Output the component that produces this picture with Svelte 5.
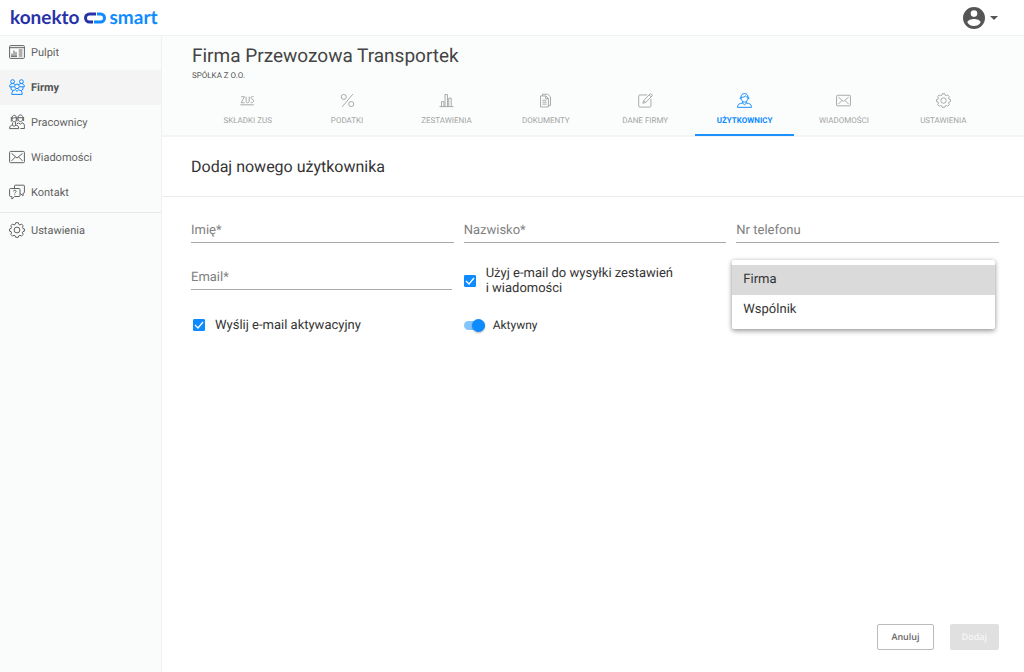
<script>
  const nav = [
    { id: 'board', label: 'Pulpit' },
    { id: 'companies', label: 'Firmy', active: true },
    { id: 'staff', label: 'Pracownicy' },
    { id: 'mail', label: 'Wiadomości' },
    { id: 'chat', label: 'Kontakt' },
    { id: 'gear', label: 'Ustawienia', separated: true }
  ];

  const tabs = [
    { id: 'zus', label: 'Składki ZUS' },
    { id: 'percent', label: 'Podatki' },
    { id: 'chart', label: 'Zestawienia' },
    { id: 'docs', label: 'Dokumenty' },
    { id: 'edit', label: 'Dane firmy' },
    { id: 'user', label: 'Użytkownicy', active: true },
    { id: 'mail', label: 'Wiadomości' },
    { id: 'gear', label: 'Ustawienia' }
  ];

  let firstName = $state('');
  let lastName = $state('');
  let phone = $state('');
  let email = $state('');
  let useEmail = $state(true);
  let sendActivation = $state(true);
  let enabled = $state(true);
  let role = $state('Firma');
</script>

{#snippet icon(id)}
  <svg class="icon" viewBox="0 0 16 16" aria-hidden="true">
    {#if id === 'board'}
      <rect x=".6" y="1.6" width="14.8" height="12.8" rx="1" />
      <path d="M.6 3.7h14.8M3 12.3V9.5M5 12.3V6.5M7 12.3V8M2 12.3h6M9.8 6h3.6M9.8 8h3.6M9.8 10h3.6M9.8 12h3.6" />
    {:else if id === 'companies'}
      <circle cx="3.600" cy="2.600" r="1.900" />
      <circle cx="12.400" cy="2.600" r="1.900" />
      <circle cx="8" cy="7.400" r="2.300" />
      <path d="M.6 7.800c0-2.200 1-3.200 3-3.200 1.400 0 2.100.4 2.600 1.200M.6 7.800h4.600M15.400 7.800c0-2.200-1-3.200-3-3.200-1.400 0-2.100.4-2.600 1.200M15.400 7.800h-4.600M2.800 15.400c0-3.200 1.200-4.200 3.600-4.600L8 12.300l1.600-1.500c2.400.4 3.600 1.400 3.600 4.600zM2 8v2.300l1.900 1.300M14 8v2.300l-1.900 1.300" />
    {:else if id === 'staff'}
      <path d="M3 5.500V4c0-1.700.9-2.700 2.200-2.700S7.300 2.300 7.300 4v1.500c0 1.300-1 2.300-2.100 2.300S3 6.800 3 5.500zM3 4.200c1.600 0 2.500-.4 3-1 .3.600.7.900 1.300 1" />
      <path d="M9 5V3.500C9 1.900 10 1 11.400 1s2.400.9 2.400 2.500V5c0 1.400-1.100 2.500-2.400 2.500S9 6.400 9 5zM9 3.700h4.800M2.300 3v4.600M8 3v4.500M14.600 3v4" />
      <path d="M.6 14.600c0-2.400 1-3.200 2.600-3.500l1.900 1.300L7 11.100c1.800.3 2.700 1.100 2.700 3.500zM3.600 10.900V8.500M6.600 10.900V7.800M9.800 9l1.600 1.200L13 8.800c1.600.3 2.400 1.200 2.400 3.400v2.300h-4M8 9.700l1.600-.7" />
    {:else if id === 'mail'}
      <rect x=".6" y="2.400" width="14.800" height="11.300" rx="1" />
      <path d="M2.500 4.400 8 9l5.500-4.600M2.500 11.900l3.800-3.900M13.500 11.900 9.700 8" />
    {:else if id === 'chat'}
      <path d="M5.500 4.300V2c0-.5.300-.8.800-.8h8.300c.5 0 .8.300.8.800v6.300c0 .5-.3.800-.8.800h-.5v2.700l-2.700-2.300" />
      <path d="M1.400 4.500h8.800c.5 0 .8.300.8.800v6.400c0 .5-.3.800-.8.800H5.700l-2.800 2.600v-2.600H1.400c-.5 0-.8-.3-.8-.8V5.300c0-.5.300-.8.800-.8z" />
      <path d="M4.400 7.400c0-.7.500-1.200 1.300-1.200s1.400.5 1.400 1.200c0 .9-1.300 1-1.300 2M5.800 10.400v.8" />
    {:else if id === 'gear'}
      <circle cx="8" cy="8" r="2.900" />
      <path d="M6.700.7h2.600l.5 1.700 1.100.5 1.600-.9 1.700 1.800-.8 1.500.5 1.200 1.500.4v2.300l-1.600.5-.4 1.100.8 1.600-1.700 1.700-1.600-.8-1.100.5-.5 1.500H6.700l-.5-1.500-1.100-.5-1.600.8-1.700-1.700.8-1.600-.4-1.100-1.600-.5V6.900l1.500-.4.5-1.200-.8-1.500L3.500 2l1.600.9 1.100-.5z" />
    {:else if id === 'zus'}
      <path d="M1.200 4h3.600L1.200 10.400h3.700M6.500 3.900v4.700c0 1.200.7 1.800 1.600 1.800s1.700-.6 1.700-1.800V3.900M14.500 3.900c-2-.3-3 .4-2.900 1.300.1 1.500 2.900 1.200 2.900 3.200 0 1.300-1.200 2.200-3 2M.4 12.600h14.300" />
    {:else if id === 'percent'}
      <circle cx="4" cy="4.200" r="2.700" />
      <circle cx="12" cy="11.800" r="2.700" />
      <path d="M13.700 1.200 2.300 14.800" />
    {:else if id === 'chart'}
      <path d="M.6 14.500h14.800M2.600 14.500V9.200h2.600v5.300M6.400 14.500V1.600H9v12.900M10.400 14.500v-9H13v9" />
    {:else if id === 'docs'}
      <path d="M4.800 3V1.300h5.600l2.900 2.800v9.100h-2" />
      <path d="M2.700 3.100h5.600l2.800 2.800v9H2.700zM8.200 3.200V6H11M4.700 7.700h4.400M4.700 9.800h4.400M4.700 11.900h4.400" />
    {:else if id === 'edit'}
      <path d="M9.800 2.100H2c-.8 0-1.300.5-1.300 1.300v10.300c0 .8.500 1.300 1.300 1.300h10.500c.8 0 1.300-.5 1.300-1.300V6.500" />
      <path d="M5.200 11l.8-3L13 .9c.8-.6 2.700 1.100 2.100 2.100L8.200 10.100zM11.900 2l2.200 2.200M6 8l2.200 2.100" />
    {:else if id === 'user'}
      <path d="M4.200 4.800C4.200 2 5.700.6 8 .6s3.800 1.400 3.800 4.200c0 2.900-1.600 4.900-3.800 4.900S4.200 7.700 4.200 4.800z" />
      <path d="M4.200 4.600c2.700 0 4.300-.6 5-1.400.6.800 1.400 1.200 2.600 1.400M3.500 4.500v2M12.500 4.500v2M6 9.200v1.600l2 1.700 2-1.700V9.200M6 10.800c-3.800.3-5.400 1.200-5.400 4.500h14.800c0-3.300-1.600-4.200-5.400-4.500" />
    {/if}
  </svg>
{/snippet}

<div class="app">
  <header class="topbar">
    <a class="logo" href="#home">
      <span>konekto</span>
      <svg viewBox="0 0 22 12" aria-hidden="true">
        <path class="link-left" d="M12 2H5.500a4 4 0 0 0 0 8h3.500" />
        <path class="link-right" d="M13 2h3.500a4 4 0 0 1 0 8H10" />
      </svg>
      <span class="bright">smart</span>
    </a>
    <button class="account" aria-label="Konto">
      <svg class="avatar" viewBox="2 2 20 20" aria-hidden="true">
        <path d="M12 2a10 10 0 1 0 0 20 10 10 0 0 0 0-20zm0 3a3 3 0 1 1 0 6 3 3 0 0 1 0-6zm0 14.200a7.200 7.200 0 0 1-6-3.220c.03-1.990 4-3.080 6-3.080s5.970 1.090 6 3.080a7.200 7.200 0 0 1-6 3.220z" />
      </svg>
      <svg class="caret" viewBox="0 0 8 4" aria-hidden="true"><path d="M0 0h8L4 4z" /></svg>
    </button>
  </header>

  <div class="body">
    <nav class="sidebar" aria-label="Menu">
      {#each nav as item}
        <a href="#{item.id}" class:active={item.active} class:separated={item.separated}>
          {@render icon(item.id)}
          <span>{item.label}</span>
        </a>
      {/each}
    </nav>

    <main>
      <section class="company">
        <h1>Firma Przewozowa Transportek</h1>
        <p>SPÓŁKA Z O.O.</p>
        <nav class="tabs" aria-label="Firma">
          {#each tabs as tab}
            <a href="#{tab.id}" class:active={tab.active}>
              {@render icon(tab.id)}
              <span>{tab.label}</span>
            </a>
          {/each}
        </nav>
      </section>

      <h2>Dodaj nowego użytkownika</h2>

      <form onsubmit={(e) => e.preventDefault()}>
        <div class="fields">
          <input class="text" aria-label="Imię" placeholder="Imię*" bind:value={firstName} />
          <input class="text" aria-label="Nazwisko" placeholder="Nazwisko*" bind:value={lastName} />
          <input class="text" aria-label="Nr telefonu" placeholder="Nr telefonu" bind:value={phone} />

          <input class="text email" type="email" aria-label="Email" placeholder="Email*" bind:value={email} />
          <label class="check reports">
            <input type="checkbox" bind:checked={useEmail} />
            <span>Użyj e-mail do wysyłki zestawień<br />i wiadomości</span>
          </label>
          <div class="role">
            <select class="panel" size="2" aria-label="Rola" bind:value={role}>
              <option>Firma</option>
              <option>Wspólnik</option>
            </select>
          </div>

          <label class="check activation">
            <input type="checkbox" bind:checked={sendActivation} />
            <span>Wyślij e-mail aktywacyjny</span>
          </label>
          <label class="switch">
            <input type="checkbox" role="switch" bind:checked={enabled} />
            <span>Aktywny</span>
          </label>
        </div>

        <div class="actions">
          <button type="button" class="cancel">Anuluj</button>
          <button type="submit" class="submit" disabled>Dodaj</button>
        </div>
      </form>
    </main>
  </div>
</div>

<style>
  :global(body) {
    margin: 0;
    background: #fff;
  }

  .app,
  .app * {
    box-sizing: border-box;
  }

  .app {
    display: flex;
    flex-direction: column;
    min-height: 100vh;
    font-family: Roboto, 'Liberation Sans', sans-serif;
    text-rendering: geometricPrecision;
    color: #333;
  }

  a {
    color: inherit;
    text-decoration: none;
  }

  button,
  input,
  select {
    font: inherit;
    color: inherit;
    text-rendering: inherit;
  }

  .icon {
    flex: none;
    width: 16px;
    height: 16px;
    fill: none;
    stroke: currentColor;
    stroke-width: 1;
    stroke-linejoin: round;
  }

  .topbar {
    display: flex;
    align-items: center;
    justify-content: space-between;
    height: 36px;
    padding: 0 26px 0 10px;
    border-bottom: 1px solid #f0f1f1;
  }

  .logo {
    display: flex;
    align-items: center;
    gap: 4px;
    font: 700 19px/24px Lato, sans-serif;
    color: #2832a8;
  }

  .logo svg {
    width: 22px;
    height: 12px;
    fill: none;
    stroke-width: 3;
  }

  .link-left {
    stroke: #2832a8;
  }

  .link-right {
    stroke: #0d8bff;
  }

  .bright {
    color: #0d8bff;
  }

  .account {
    display: flex;
    align-items: center;
    gap: 5px;
    padding: 0;
    border: 0;
    background: none;
    color: #555;
  }

  .account svg {
    fill: currentColor;
  }

  .avatar {
    width: 22px;
    height: 22px;
  }

  .caret {
    width: 8px;
    height: 4px;
  }

  .body {
    display: flex;
    flex: 1;
  }

  .sidebar {
    flex: none;
    width: 162px;
    border-right: 1px solid #eff1f1;
    background: #fafcfb;
    font-size: 11px;
    color: #616161;
  }

  .sidebar a {
    display: flex;
    align-items: center;
    gap: 6px;
    height: 35px;
    padding: 0 9px 1px;
  }

  .sidebar a:first-child {
    height: 34px;
    padding-bottom: 2px;
  }

  .sidebar a.active {
    background: #f4f4f4;
    font-weight: 700;
    color: #555;
  }

  .sidebar a.active .icon {
    color: #0d8bff;
  }

  .sidebar a.separated {
    margin-top: 2px;
    height: 36px;
    border-top: 1px solid #e6e8e8;
  }

  main {
    display: flex;
    flex: 1;
    flex-direction: column;
    min-width: 0;
  }

  .company {
    padding: 7px 31px 0 30px;
    border-bottom: 2px solid #f3f4f4;
    background: #fbfdfc;
  }

  h1,
  h2,
  p {
    margin: 0;
    font-weight: 400;
  }

  h1 {
    font-size: 19px;
    line-height: 26px;
    color: #444;
  }

  p {
    font-size: 8px;
    line-height: 14px;
    color: #555;
  }

  .tabs {
    display: grid;
    grid-template-columns: repeat(8, 1fr);
    margin: 3px 0 -1px 6px;
    font-size: 8px;
    line-height: 12px;
    text-transform: uppercase;
    color: #a3a3a3;
  }

  .tabs a {
    display: flex;
    flex-direction: column;
    align-items: center;
    gap: 7px;
    padding: 7px 0;
    border-bottom: 2px solid transparent;
  }

  .tabs .icon {
    width: 15px;
    height: 15px;
  }

  .tabs a.active {
    border-color: #1e90ff;
    font-weight: 700;
    color: #0d8bff;
  }

  h2 {
    padding: 0 29px;
    border-bottom: 1px solid #ececec;
    font-size: 16px;
    line-height: 59px;
    color: #333;
  }

  form {
    display: flex;
    flex: 1;
    flex-direction: column;
    justify-content: space-between;
    padding: 22px 25px 22px 29px;
    font-size: 13px;
  }

  .fields {
    display: grid;
    grid-template-columns: repeat(3, 1fr);
    grid-template-rows: 24px 24px 24px;
    gap: 23px 10px;
  }

  .text {
    min-width: 0;
    padding: 0;
    border: 0;
    border-bottom: 1px solid #a8a8a8;
    border-radius: 0;
    outline: 0;
    background: none;
  }

  .text::placeholder {
    color: #808080;
    opacity: 1;
  }

  .email {
    margin-right: 2px;
  }

  .check {
    display: flex;
    align-items: center;
    gap: 10px;
    line-height: 15px;
  }

  .check input {
    flex: none;
    appearance: none;
    width: 12px;
    height: 12px;
    margin: 0;
    border: 1px solid #0d8bff;
    border-radius: 1px;
  }

  .check input:checked {
    background: #0d8bff url("data:image/svg+xml,%3Csvg xmlns='http://www.w3.org/2000/svg' viewBox='0 0 10 10'%3E%3Cpath d='M1 5l3 3 5-6' fill='none' stroke='white' stroke-width='1.300'/%3E%3C/svg%3E") center / 10px 10px;
  }

  .reports {
    padding-top: 6px;
  }

  .activation {
    padding-left: 2px;
  }

  .switch {
    display: flex;
    align-items: center;
    gap: 8px;
    font-size: 12px;
  }

  .switch input {
    position: relative;
    appearance: none;
    width: 21px;
    height: 9px;
    margin: 0;
    border-radius: 5px;
    background: #ccc;
  }

  .switch input::before {
    content: '';
    position: absolute;
    top: -2px;
    left: 0;
    width: 13px;
    height: 13px;
    border-radius: 50%;
    background: #fafafa;
    box-shadow: 0 1px 2px rgb(0 0 0 / 30%);
  }

  .switch input:checked {
    background: #86c4fc;
  }

  .switch input:checked::before {
    left: 8px;
    background: #0d8bff;
  }

  .role {
    position: relative;
  }

  .panel {
    position: absolute;
    top: -6px;
    left: -4px;
    width: 100%;
    height: 69px;
    padding: 5px 0;
    border: 0;
    border-radius: 2px;
    outline: 0;
    overflow: hidden;
    background: #fff;
    box-shadow: 0 1px 5px rgb(0 0 0 / 35%), 0 3px 5px rgb(0 0 0 / 14%);
  }

  .panel option {
    min-height: 30px;
    padding: 7px 11px;
    color: #333;
  }

  .panel option:checked {
    background: #dadada linear-gradient(#dadada, #dadada);
  }

  .actions {
    display: flex;
    justify-content: flex-end;
    gap: 16px;
    font: 600 9px/12px 'Open Sans', sans-serif;
  }

  .actions button {
    height: 26px;
    padding: 0 13px;
    border: 1px solid #bbb;
    border-radius: 2px;
    background: #fff;
    color: #666;
  }

  .actions .submit {
    padding: 0 11px;
    border-color: #e0e0e0;
    background: #e0e0e0;
    color: #f6f6f6;
  }
</style>
